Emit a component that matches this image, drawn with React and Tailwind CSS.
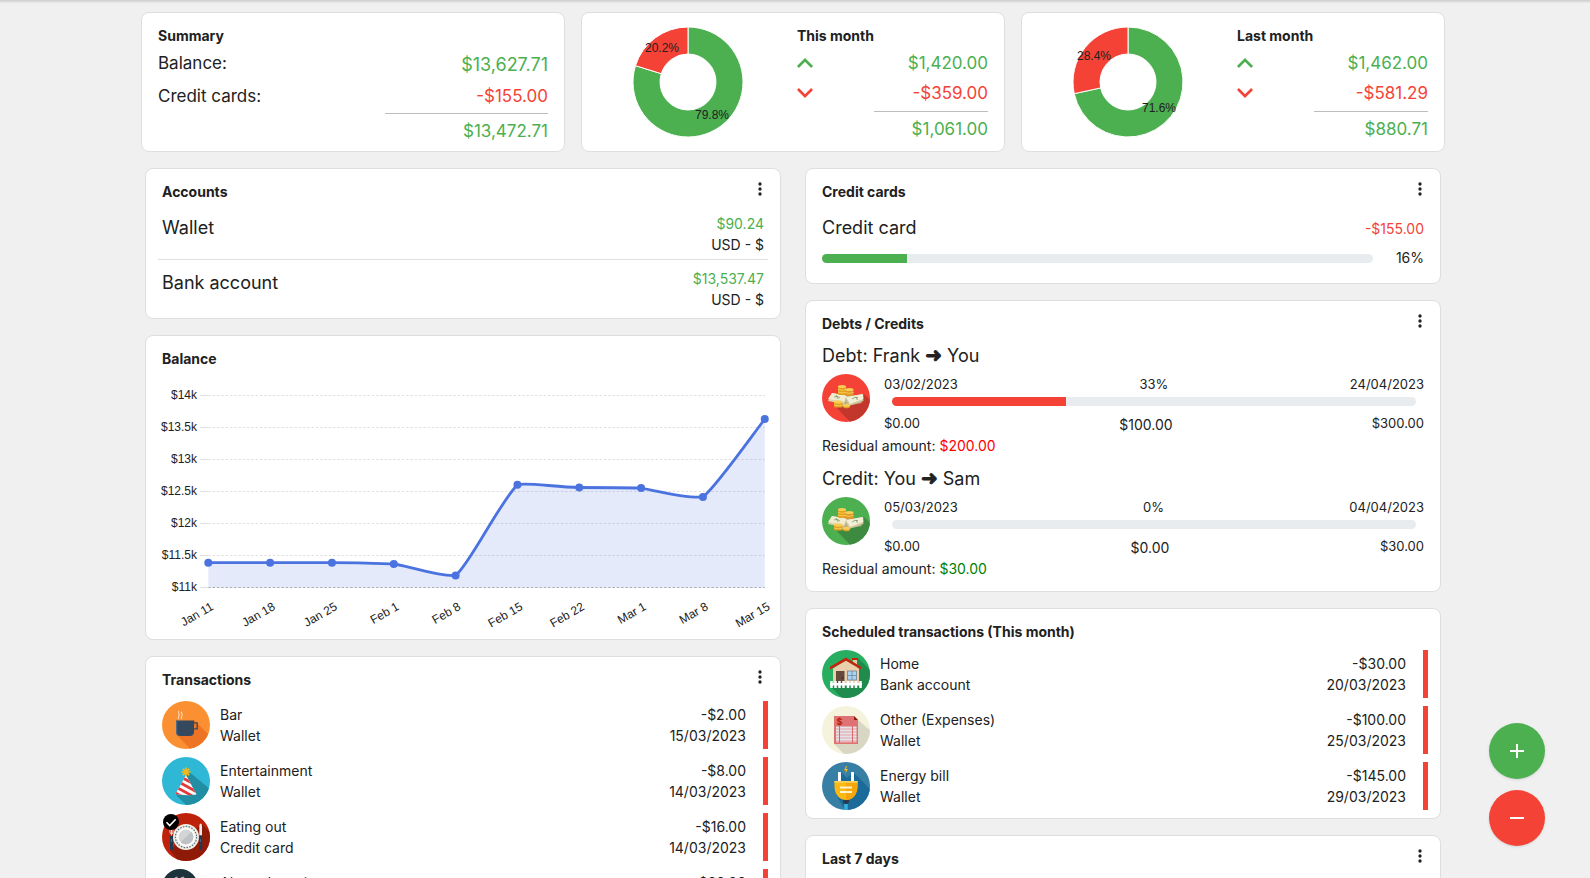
import React, { useId } from 'react';

const GREEN = 'text-[#4caf50]';
const RED = 'text-[#f44336]';

function Disc({ color, shadow, shadowPoints, label, children, size = 'size-12' }) {
  const id = useId();
  return (
    <svg viewBox="0 0 48 48" className={`${size} block shrink-0`} role="img" aria-label={label}>
      <defs>
        <clipPath id={id}>
          <circle cx="24" cy="24" r="24" />
        </clipPath>
      </defs>
      <g clipPath={`url(#${id})`}>
        <rect width="48" height="48" fill={color} />
        <polygon points={shadowPoints} fill={shadow} />
        {children}
      </g>
    </svg>
  );
}

function BarIcon() {
  return (
    <Disc label="Bar" color="#fb9033" shadow="#ee7425" shadowPoints="32,19 48,35 48,48 30,50 15,34">
      <path d="M17 18c-2-2 1-3 0-5s-1-2 0-3M20 18c-2-2 1-3 0-5s-1-1 0-2" fill="none" stroke="#fbdcc0" strokeWidth="1.100" />
      <path d="M14 19.5h18V31c0 2.5-1.500 4-4 4H18c-2.500 0-4-1.500-4-4z" fill="#34495e" />
      <path d="M14 19.500h1.200V31c0 2.500 1 4 4 4h-1c-2.700 0-4.200-1.500-4.200-4z" fill="#546b82" />
      <path d="M32 21.800h3.200v6H32" fill="none" stroke="#34495e" strokeWidth="1.300" />
    </Disc>
  );
}

function PartyIcon() {
  const id = useId();
  return (
    <Disc label="Entertainment" color="#2fb8d6" shadow="#228ea3" shadowPoints="26,14 48,32 48,48 26,50 14,38">
      <clipPath id={id}>
        <path d="M24 18 L34.500 37.500 Q24 39 13.500 37 Z" />
      </clipPath>
      <g clipPath={`url(#${id})`}>
        <rect x="12" y="16" width="24" height="24" fill="#fff" />
        <path d="M19 20l11 6M16 24.500l18 10M14 30l20 11M11 34.500l14 8" stroke="#e5383b" strokeWidth="2.700" />
      </g>
      <path d="M24 10.500v9M19.500 15h9M20.800 11.800l6.400 6.400M27.200 11.800l-6.400 6.400" stroke="#f5b916" strokeWidth="1.700" />
    </Disc>
  );
}

function DinnerIcon() {
  return (
    <Disc label="Eating out" color="#bf220a" shadow="#8f1a08" shadowPoints="40,11 50,21 50,50 18,50 8,37">
      <circle cx="24" cy="24" r="13" fill="#f3f0e4" />
      <circle cx="24" cy="24" r="10.600" fill="none" stroke="#5a7196" strokeWidth="1.200" strokeDasharray="1.600 1.300" />
      <circle cx="24" cy="24" r="8.700" fill="#fff" />
      <circle cx="24" cy="24" r="7.500" fill="#d2d4d6" />
      <path d="M29.300 18.700 L18.700 29.300 A7.500 7.500 0 0 0 29.300 18.700z" fill="#bfc2c5" />
      <path d="M8 15v4q0 2 1.500 2T11 19v-4M9.500 15v8" fill="none" stroke="#e8eaec" strokeWidth="0.9" />
      <rect x="8" y="22.500" width="3" height="14.500" rx="1" fill="#22384f" />
      <path d="M37.300 22.500V13q0-2.500 1.500-2.500 1.200 0 1.200 3v9z" fill="#e8eaec" />
      <rect x="37" y="22.500" width="3.200" height="14.500" rx="1" fill="#22384f" />
      <path d="M9.500 26v3M38.600 26v3" stroke="#3f6c95" strokeWidth="1" />
    </Disc>
  );
}

function SavingIcon() {
  return (
    <Disc size="size-9" label="Alarm deposit" color="#1d333b" shadow="#13242a" shadowPoints="30,14 50,34 50,50 30,50 14,34">
      <path d="M17 11l3-1 2 3-4 3zM25 11l4-1 2 4-5 2z" fill="#b9a7a7" />
      <circle cx="24" cy="26" r="10" fill="#c7d0d4" />
    </Disc>
  );
}

function MoneyIcon({ color, shadow, label }) {
  return (
    <Disc label={label} color={color} shadow={shadow} shadowPoints="42,20 50,28 50,50 30,50 14,33">
      <path d="M7 25l26-4 7 8-22 4z" fill="#b9ad84" />
      <path d="M6 27l4-8 15 3-3 8z" fill="#d9d3b0" />
      <path d="M6 25l4-6 15 2.500-3 6.500z" fill="#f1ecd0" />
      <path d="M23 24l17-4 1.500 7L27 32z" fill="#cfc69d" />
      <path d="M24 23l17-3 .5 5L28 30z" fill="#f3efd6" />
      <path d="M12 23q3-2 6 1M30 25q3-2.500 6-1.500M34 23l1.500 3M14 21l2 4" fill="none" stroke="#6f8c5a" strokeWidth="0.7" />
      <rect x="16" y="12" width="8" height="9" rx="1.500" fill="#e4a11f" />
      <ellipse cx="20" cy="12.500" rx="4" ry="1.500" fill="#f7cf57" />
      <path d="M16 15.500q4 1.700 8 0M16 18q4 1.700 8 0" fill="none" stroke="#f7cf57" strokeWidth="0.9" />
      <rect x="23" y="15" width="8.500" height="7" rx="1.500" fill="#e0982a" />
      <ellipse cx="27.300" cy="15.500" rx="4.200" ry="1.500" fill="#f7cf57" />
      <path d="M23 18.500q4 1.700 8.500 0" fill="none" stroke="#f7cf57" strokeWidth="0.9" />
      <rect x="12" y="27" width="8.500" height="6.500" rx="1.500" fill="#e4a11f" />
      <ellipse cx="16.200" cy="28" rx="4.200" ry="1.700" fill="#f7cf57" />
      <path d="M12 31q4 1.700 8.500 0" fill="none" stroke="#f7cf57" strokeWidth="0.9" />
      <ellipse cx="24.500" cy="32.300" rx="3.500" ry="2" fill="#e4a11f" />
      <ellipse cx="24.500" cy="31.300" rx="3.500" ry="1.500" fill="#f7cf57" />
    </Disc>
  );
}

function HomeIcon() {
  return (
    <Disc label="Home" color="#27ae60" shadow="#1f8b4c" shadowPoints="36,8 50,22 50,50 22,50 9,37">
      <rect x="31" y="9" width="4" height="8" fill="#e8c9a2" />
      <rect x="30" y="8" width="6" height="2" fill="#c0270e" />
      <path d="M11 18.500L24 10l13 8.500V35H11z" fill="#e9cfac" />
      <path d="M8 19.500v-2.700L24 7.500l15 9.300v2.700L24 10.800z" fill="#c0270e" />
      <rect x="14" y="21" width="8.500" height="13" fill="#664b3c" />
      <circle cx="20.500" cy="28" r="0.800" fill="#2b201a" />
      <rect x="25.500" y="21" width="9" height="9" fill="#a9d4f3" stroke="#77818c" strokeWidth="0.8" />
      <path d="M30 21v9M25.500 25.500h9" stroke="#6c8aa5" strokeWidth="0.8" />
      <path d="M8 33h32v2.500H8z" fill="#fff" />
      <path d="M9.500 31v7M13.500 31v7M17.500 31v7M21.500 31v7M26 31v7M30 31v7M34 31v7M38.500 31v7" stroke="#fff" strokeWidth="2.500" />
    </Disc>
  );
}

function BillIcon() {
  return (
    <Disc label="Other (Expenses)" color="#f6f3dc" shadow="#d9d6c3" shadowPoints="36,14 50,26 50,50 24,50 12,38">
      <path d="M12 10h20l4 4v24H12z" fill="#df7373" />
      <path d="M32 10l4 4h-4z" fill="#8f1a08" />
      <rect x="14" y="20.500" width="20.500" height="16" fill="#e8b4b8" />
      <path d="M14 21.500h20.500M14 24.500h20.500M14 27.500h20.500M14 30.500h20.500M14 33.500h20.500" stroke="#dfe5ea" strokeWidth="1.500" />
      <path d="M17.500 20v17M30.500 20v17" stroke="#d9686c" strokeWidth="1" />
      <text x="14.500" y="18.500" fontSize="9" fontWeight="700" fill="#b71c0c" fontFamily="Inter, sans-serif">$</text>
    </Disc>
  );
}

function PlugIcon() {
  return (
    <Disc label="Energy bill" color="#377fa5" shadow="#1a6a9a" shadowPoints="19,10 25,16 31,10 50,29 50,50 24,50 14,32">
      <path d="M24 4l-2 4.500h2l-.8 3.500 2.800-5h-2l1-3z" fill="#f5b916" />
      <rect x="16" y="10" width="3" height="10" rx="0.500" fill="#fff" />
      <rect x="29" y="10" width="3" height="10" rx="0.500" fill="#fff" />
      <path d="M22.200 41h3.600v8h-3.600z" fill="#38b2dc" />
      <path d="M21 37h6v3.500l-1.500 1.500h-3L21 40.500z" fill="#2b3b4f" />
      <path d="M12.500 19h23v5c0 8-4.500 14-11.500 14s-11.500-6-11.500-14z" fill="#fdb913" />
      <path d="M24 19h11.500v5c0 8-4.500 14-11.500 14z" fill="#f5a60c" />
      <path d="M12.500 19h23v1.700h-23z" fill="#fcd15a" />
      <path d="M18 25.500h12M18 30h12" stroke="#fff4c9" strokeWidth="1.800" />
    </Disc>
  );
}

function Card({ title, menu, className = '', children }) {
  return (
    <section className={`rounded-lg border border-[#dedede] bg-white px-4 pt-3 ${className}`}>
      <div className="flex h-[21px] justify-between">
        <h2 className="text-sm leading-[21px] font-bold">{title}</h2>
        {menu && (
          <button type="button" aria-label={`${title} menu`} className="-mt-0.5 -mr-1.5 size-5">
            <svg viewBox="0 0 24 24" className="size-5" fill="#212121">
              <circle cx="12" cy="6" r="2" />
              <circle cx="12" cy="12" r="2" />
              <circle cx="12" cy="18" r="2" />
            </svg>
          </button>
        )}
      </div>
      {children}
    </section>
  );
}

function Chevron({ down }) {
  return (
    <svg viewBox="6 8 12 7.410" className="h-[10px] w-4" role="img" aria-label={down ? 'Expenses' : 'Income'}>
      {down ? (
        <path d="M7.410 8L12 12.580 16.590 8 18 9.410l-6 6-6-6z" fill="#f44336" />
      ) : (
        <path d="M7.410 15.410L12 10.830l4.590 4.580L18 14l-6-6-6 6z" fill="#4caf50" />
      )}
    </svg>
  );
}

function Donut({ expense, labels }) {
  const angle = ((100 - expense) / 100) * 2 * Math.PI;
  const at = (r) => [55 + r * Math.sin(angle), 55 - r * Math.cos(angle)];
  const [ox, oy] = at(55);
  const [ix, iy] = at(28);
  return (
    <svg viewBox="0 0 110 110" className="size-[110px]" role="img" aria-label="Income and expenses">
      <path d={`M55 0A55 55 0 1 1 ${ox} ${oy}L${ix} ${iy}A28 28 0 1 0 55 27z`} fill="#4caf50" stroke="#fff" strokeWidth="1" />
      <path d={`M${ox} ${oy}A55 55 0 0 1 55 0V27A28 28 0 0 0 ${ix} ${iy}z`} fill="#f44336" stroke="#fff" strokeWidth="1" />
      {labels.map(([text, x, y]) => (
        <text key={text} x={x} y={y} textAnchor="middle" fontSize="12" fill="#212121" fontFamily="'Liberation Sans', Arial, sans-serif">
          {text}
        </text>
      ))}
    </svg>
  );
}

function MonthCard({ title, income, expenses, total, share, labels }) {
  return (
    <section className="grid grid-cols-2 rounded-lg border border-[#dedede] bg-white">
      <div className="flex items-center justify-center">
        <Donut expense={share} labels={labels} />
      </div>
      <div className="pt-3 pr-4 pb-[7px] pl-1 text-[17px] leading-[26px]">
        <h2 className="text-sm leading-[21px] font-bold">{title}</h2>
        <div className="mt-1 flex items-center justify-between">
          <Chevron />
          <span className={GREEN}>{income}</span>
        </div>
        <div className="mt-1 flex items-center justify-between">
          <Chevron down />
          <span className={RED}>{expenses}</span>
        </div>
        <div className={`mt-[5px] ml-auto w-[114px] border-t border-[#bdbdbd] pt-1 text-right ${GREEN}`}>{total}</div>
      </div>
    </section>
  );
}

function Progress({ value, color, label, className }) {
  return (
    <div
      role="progressbar"
      aria-label={label}
      aria-valuenow={Math.round(value)}
      aria-valuemin={0}
      aria-valuemax={100}
      className={`h-[9px] overflow-hidden rounded-full bg-[#e9ecef] ${className}`}
    >
      <div className={`h-full ${color}`} style={{ width: `${value}%` }} />
    </div>
  );
}

function Account({ name, amount }) {
  return (
    <li className="flex justify-between px-1 pt-2 pb-1">
      <span className="text-lg leading-[30px]">{name}</span>
      <span className="text-right text-sm leading-[21px]">
        <span className={`block ${GREEN}`}>{amount}</span>
        <span className="block">USD - $</span>
      </span>
    </li>
  );
}

function Debt({ from, to, kind, icon, start, end, percent, zero, paid, total, residual, residualColor }) {
  return (
    <article className="pt-2 pb-px">
      <h3 className="h-7 text-lg leading-7">
        {kind}: {from}{' '}
        <span className="font-['DejaVu_Sans',sans-serif] text-xl leading-none font-bold [-webkit-text-stroke:1px]">➜</span> {to}
      </h3>
      <div className="mt-1 flex gap-[14px]">
        {icon}
        <div className="flex-1">
          <div className="flex justify-between text-[13px] leading-5">
            <span>{start}</span>
            <span>{Math.round(percent)}%</span>
            <span>{end}</span>
          </div>
          <Progress value={percent} color="bg-[#f44336]" label={`${kind} repaid`} className="mx-2 mt-[3px]" />
          <div className="mt-[7px] flex justify-between text-[13px] leading-5">
            <span>{zero}</span>
            <span className="text-sm leading-6">{paid}</span>
            <span>{total}</span>
          </div>
        </div>
      </div>
      <p className="-mt-0.5 text-sm leading-[21px]">
        Residual amount: <span className={residualColor}>{residual}</span>
      </p>
    </article>
  );
}

function Transaction({ icon, checked, name, account, amount, date }) {
  return (
    <li className="flex h-12 items-stretch">
      <div className="relative w-12 shrink-0">
        {icon}
        {checked && (
          <svg viewBox="0 0 16 16" className="absolute top-px left-px size-4" role="img" aria-label="Confirmed">
            <circle cx="8" cy="8" r="8" fill="#000" />
            <path d="M3.500 8.300l3.200 3.200 6-6.300" fill="none" stroke="#fff" strokeWidth="1.600" />
          </svg>
        )}
      </div>
      <div className="ml-[10px] flex-1 pt-[3px] text-sm leading-[21px]">
        <p>{name}</p>
        <p>{account}</p>
      </div>
      <div className="pt-[3px] pr-[17px] text-right text-sm leading-[21px]">
        <p>{amount}</p>
        <p>{date}</p>
      </div>
      <div className="w-[5px] bg-[#f44336]" />
    </li>
  );
}

const TICKS = ['$14k', '$13.5k', '$13k', '$12.5k', '$12k', '$11.5k', '$11k'];
const DATES = ['Jan 11', 'Jan 18', 'Jan 25', 'Feb 1', 'Feb 8', 'Feb 15', 'Feb 22', 'Mar 1', 'Mar 8', 'Mar 15'];
const LEVELS = [193.7, 193.7, 193.7, 195, 206.500, 115.7, 118.500, 119, 128, 50];
const px = (i) => 62.3 + i * 61.83;

function curve() {
  const [a, b, c, d, e, f, g, h, i, j] = LEVELS.map((y, n) => [px(n), y]);
  return [
    `M${a} L${b} L${c}`,
    `C${c[0] + 24} ${c[1]} ${d[0] - 24} ${d[1] - 0.8} ${d}`,
    `C${d[0] + 20} ${d[1] + 3} ${e[0] - 20} ${e[1] + 1} ${e}`,
    `C${e[0] + 14} ${e[1] - 11} ${f[0] - 18} ${f[1] + 18} ${f}`,
    `C${f[0] + 8} ${f[1] - 2.5} ${g[0] - 24} ${g[1] - 0.5} ${g}`,
    `C${g[0] + 20} ${g[1]} ${h[0] - 20} ${h[1] - 0.5} ${h}`,
    `C${h[0] + 20} ${h[1] + 4} ${i[0] - 16} ${i[1] + 1.5} ${i}`,
    `C${i[0] + 12} ${i[1] - 9} ${j[0] - 18} ${j[1] + 24} ${j}`,
  ].join(' ');
}

function BalanceChart() {
  const line = curve();
  return (
    <svg viewBox="0 0 634 270" className="block w-full" role="img" aria-label="Balance over time">
      {TICKS.map((t, i) => (
        <g key={t}>
          <line x1="54" x2="62" y1={26.5 + i * 32} y2={26.5 + i * 32} stroke="#e0e0e0" />
          <line
            x1="62.300"
            x2="618.800"
            y1={26.5 + i * 32}
            y2={26.5 + i * 32}
            stroke={i === 6 ? '#b4b4b4' : '#e0e0e0'}
            strokeDasharray="2.500 1.800"
          />
        </g>
      ))}
      <path d={`${line} L${px(9)} 218.500 L${px(0)} 218.500 Z`} fill="#4b73e0" fillOpacity="0.150" />
      <path d={line} fill="none" stroke="#4b73e0" strokeWidth="2.800" />
      {LEVELS.map((y, i) => (
        <circle key={DATES[i]} cx={px(i)} cy={y} r="4" fill="#4b73e0" />
      ))}
      <g fontSize="12" fill="#212121" textAnchor="end" fontFamily="'Liberation Sans', Arial, sans-serif">
        {TICKS.map((t, i) => (
          <text key={t} x="51" y={30 + i * 32}>
            {t}
          </text>
        ))}
        {DATES.map((d, i) => (
          <text key={d} transform={`translate(${px(i) + 6} 240) rotate(-30)`}>
            {d}
          </text>
        ))}
      </g>
    </svg>
  );
}

export default function App() {
  return (
    <div className="h-screen overflow-hidden bg-[#f0f0f0] font-[Inter,sans-serif] text-[#212121]">
      <div className="h-[3px] bg-linear-to-b from-[#cdcdcd] to-[#ebebeb]" />
      <main className="mx-auto mt-[9px] max-w-[1308px] pr-1">
        <div className="grid grid-cols-3 gap-4">
          <section className="rounded-lg border border-[#dedede] bg-white px-4 pt-3 pb-[7px] text-[17px] leading-[26px]">
            <h2 className="text-sm leading-[21px] font-bold">Summary</h2>
            <div className="mt-1 flex items-start justify-between">
              <span>Balance:</span>
              <span className={`text-lg leading-[30px] ${GREEN}`}>$13,627.71</span>
            </div>
            <div className="mt-[3px] flex items-baseline justify-between">
              <span>Credit cards:</span>
              <span className={RED}>-$155.00</span>
            </div>
            <div className={`mt-1 ml-auto w-[163px] border-t border-[#bdbdbd] pt-1 text-right ${GREEN}`}>$13,472.71</div>
          </section>
          <MonthCard
            title="This month"
            income="$1,420.00"
            expenses="-$359.00"
            total="$1,061.00"
            share={20.2}
            labels={[['20.2%', 29, 25], ['79.8%', 79, 92]]}
          />
          <MonthCard
            title="Last month"
            income="$1,462.00"
            expenses="-$581.29"
            total="$880.71"
            share={28.4}
            labels={[['28.4%', 21, 33], ['71.6%', 86, 85]]}
          />
        </div>

        <div className="mt-4 grid grid-cols-2 gap-6 px-1">
          <div className="flex flex-col gap-4">
            <Card title="Accounts" menu className="pb-1">
              <ul className="-mx-1 mt-[3px] divide-y divide-[#e0e0e0]">
                <Account name="Wallet" amount="$90.24" />
                <Account name="Bank account" amount="$13,537.47" />
              </ul>
            </Card>
            <Card title="Balance">
              <div className="-mx-4">
                <BalanceChart />
              </div>
            </Card>
            <Card title="Transactions" menu className="pb-2">
              <ul className="mt-[11px] -mr-1 flex flex-col gap-2">
                <Transaction icon={<BarIcon />} name="Bar" account="Wallet" amount="-$2.00" date="15/03/2023" />
                <Transaction icon={<PartyIcon />} name="Entertainment" account="Wallet" amount="-$8.00" date="14/03/2023" />
                <Transaction icon={<DinnerIcon />} checked name="Eating out" account="Credit card" amount="-$16.00" date="14/03/2023" />
                <Transaction icon={<SavingIcon />} name="Alarm deposit" account="Wallet" amount="-$20.00" date="13/03/2023" />
              </ul>
            </Card>
          </div>

          <div className="flex flex-col gap-4">
            <Card title="Credit cards" menu className="pb-[15px]">
              <div className="mt-3 flex items-baseline justify-between">
                <span className="text-lg leading-7">Credit card</span>
                <span className={`text-sm leading-[21px] ${RED}`}>-$155.00</span>
              </div>
              <div className="mt-[5px] flex items-start">
                <Progress value={15.5} color="bg-[#4caf50]" label="Credit card usage" className="mt-[7px] flex-1" />
                <span className="w-[51px] text-right text-sm leading-[21px]">16%</span>
              </div>
            </Card>
            <Card title="Debts / Credits" menu className="pb-[11px]">
              <Debt
                kind="Debt"
                from="Frank"
                to="You"
                icon={<MoneyIcon color="#f44336" shadow="#c3362c" label="Debt" />}
                start="03/02/2023"
                end="24/04/2023"
                percent={33.3}
                zero="$0.00"
                paid="$100.00"
                total="$300.00"
                residual="$200.00"
                residualColor="text-[#ff0000]"
              />
              <Debt
                kind="Credit"
                from="You"
                to="Sam"
                icon={<MoneyIcon color="#4caf50" shadow="#3d8b40" label="Credit" />}
                start="05/03/2023"
                end="04/04/2023"
                percent={0}
                zero="$0.00"
                paid="$0.00"
                total="$30.00"
                residual="$30.00"
                residualColor="text-[#008000]"
              />
            </Card>
            <Card title="Scheduled transactions (This month)" className="pb-2">
              <ul className="mt-2 -mr-1 flex flex-col gap-2">
                <Transaction icon={<HomeIcon />} name="Home" account="Bank account" amount="-$30.00" date="20/03/2023" />
                <Transaction icon={<BillIcon />} name="Other (Expenses)" account="Wallet" amount="-$100.00" date="25/03/2023" />
                <Transaction icon={<PlugIcon />} name="Energy bill" account="Wallet" amount="-$145.00" date="29/03/2023" />
              </ul>
            </Card>
            <Card title="Last 7 days" menu className="h-40" />
          </div>
        </div>
      </main>

      <div className="fixed right-[45px] bottom-8 flex flex-col gap-[11px]">
        <button type="button" aria-label="Add income" className="flex size-14 items-center justify-center rounded-full bg-[#4caf50] shadow-sm">
          <svg viewBox="0 0 14 14" className="size-[14px]">
            <path d="M0 7h14M7 0v14" stroke="#fff" strokeWidth="2" />
          </svg>
        </button>
        <button type="button" aria-label="Add expense" className="flex size-14 items-center justify-center rounded-full bg-[#f44336] shadow-sm">
          <svg viewBox="0 0 14 14" className="size-[14px]">
            <path d="M0 7h14" stroke="#fff" strokeWidth="2" />
          </svg>
        </button>
      </div>
    </div>
  );
}
